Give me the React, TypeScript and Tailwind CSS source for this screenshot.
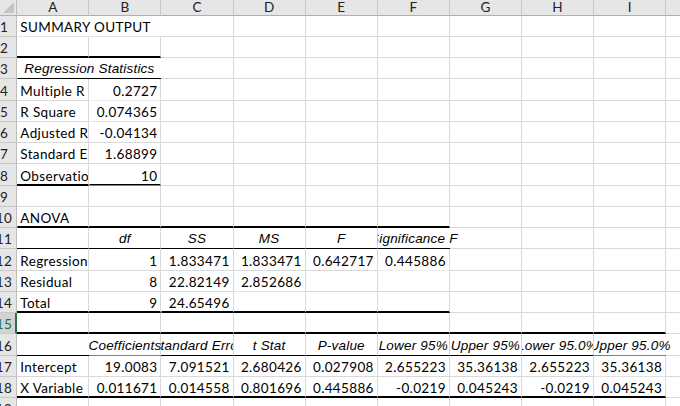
const FONT = "font-['Lato','Liberation_Sans',sans-serif]";

const COLS = ["A", "B", "C", "D", "E", "F", "G", "H", "I", "J"];

const DATA: string[][] = [
  ["SUMMARY OUTPUT"],
  [],
  ["Regression Statistics"],
  ["Multiple R", "0.2727"],
  ["R Square", "0.074365"],
  ["Adjusted R Square", "-0.04134"],
  ["Standard Error", "1.68899"],
  ["Observations", "10"],
  [],
  ["ANOVA"],
  ["", "df", "SS", "MS", "F", "Significance F"],
  ["Regression", "1", "1.833471", "1.833471", "0.642717", "0.445886"],
  ["Residual", "8", "22.82149", "2.852686"],
  ["Total", "9", "24.65496"],
  [],
  ["", "Coefficients", "Standard Error", "t Stat", "P-value", "Lower 95%", "Upper 95%", "Lower 95.0%", "Upper 95.0%"],
  ["Intercept", "19.0083", "7.091521", "2.680426", "0.027908", "2.655223", "35.36138", "2.655223", "35.36138"],
  ["X Variable 1", "0.011671", "0.014558", "0.801696", "0.445886", "-0.0219", "0.045243", "-0.0219", "0.045243"],
  [],
];

const ITALIC_ROWS = [3, 11, 16];
const NO_RIGHT = ["1-1", "3-1", "16-1", "11-6", "16-9"];
const SPAN2 = ["1-1", "3-1"];
const SELECTED_ROW = 15;

function bottom(r: number, c: number) {
  if ((r === 2 || r === 8) && c <= 2) return "border-b-2 border-b-black";
  if ((r === 10 || r === 14) && c <= 6) return "border-b-2 border-b-black";
  if ((r === 15 || r === 18) && c <= 9) return "border-b-2 border-b-black";
  if (r === 3 && c <= 2) return "border-b border-b-black";
  if (r === 11 && c <= 6) return "border-b border-b-black";
  if (r === 16 && c <= 9) return "border-b border-b-black";
  return "border-b border-b-[#d9d9d9]";
}

const isNum = (s: string) => /^-?[\d.]+$/.test(s);

function Cell({ r, c }: { r: number; c: number }) {
  const row = DATA[r - 1] ?? [];
  const text = row[c - 1] ?? "";
  const key = `${r}-${c}`;
  const span = SPAN2.includes(key);
  const italic = ITALIC_ROWS.includes(r);
  const left = c === 1 ? "x" : row[c - 2] ?? "";
  const right = row[span ? c + 1 : c] ?? "";

  let justify = "justify-start";
  if (italic) justify = "justify-center";
  else if (isNum(text)) justify = "justify-end";

  // clip where the neighbour holds a value, run on where it is empty
  let clip = "overflow-hidden";
  if (text) {
    if (left && !right) clip = "[clip-path:inset(0_-300px_0_0)]";
    else if (!left && right) clip = "[clip-path:inset(0_0_0_-300px)]";
    else if (!left && !right) clip = "overflow-visible";
  }

  const thick = bottom(r, c).includes("border-b-2");

  return (
    <div
      className={`flex items-end px-[3px] whitespace-nowrap text-[13.5px] leading-[14px] text-black ${
        thick ? "pb-[1px]" : "pb-[2px]"
      } ${justify} ${clip} ${bottom(r, c)} ${
        NO_RIGHT.includes(key) ? "" : "border-r border-r-[#d9d9d9]"
      } ${span ? "col-span-2" : ""} ${
        italic
          ? "italic font-['Liberation_Sans',sans-serif] tracking-[0.2px]"
          : "tracking-[0.35px]"
      }`}
    >
      {text && <span>{text}</span>}
    </div>
  );
}

function RowHeader({ r }: { r: number }) {
  const sel = r === SELECTED_ROW;
  return (
    <div
      className={`overflow-hidden border-b border-b-[#c8c8c8] ${
        sel
          ? "bg-[#d2d2d2] text-[#217346] border-r-2 border-r-[#217346]"
          : "bg-[#e6e6e6] text-[#222] border-r border-r-[#bdbdbd]"
      }`}
    >
      <div className="ml-[-9px] flex h-full w-[26px] items-end justify-center pb-[2px] text-[13.5px] leading-[14px] tracking-[0.3px]">
        {r}
      </div>
    </div>
  );
}

export default function App() {
  const rows = Array.from({ length: 19 }, (_, i) => i + 1);
  return (
    <div className={`h-[406px] w-[680px] overflow-hidden bg-white ${FONT}`}>
      <div className="grid grid-cols-[17.3px_repeat(9,72.1px)_60px] grid-rows-[15.5px_repeat(19,21.25px)]">
        <div className="relative border-b border-b-[#b0b0b0] border-r border-r-[#bdbdbd] bg-[#e6e6e6]">
          <svg className="absolute bottom-[2px] right-[2px]" width="11" height="11" viewBox="0 0 11 11">
            <polygon points="11,0 11,11 0,11" fill="#c4c4c4" />
          </svg>
        </div>
        {COLS.map((l) => (
          <div
            key={l}
            className="flex items-center justify-center border-b border-b-[#b0b0b0] border-r border-r-[#c6c6c6] bg-[#e6e6e6] text-[13.5px] leading-[14px] text-[#222]"
          >
            {l}
          </div>
        ))}
        {rows.map((r) => (
          <div key={r} className="contents">
            <RowHeader r={r} />
            {COLS.map((_, i) => {
              const c = i + 1;
              if (c === 2 && SPAN2.includes(`${r}-1`)) return null;
              return <Cell key={c} r={r} c={c} />;
            })}
          </div>
        ))}
      </div>
    </div>
  );
}
